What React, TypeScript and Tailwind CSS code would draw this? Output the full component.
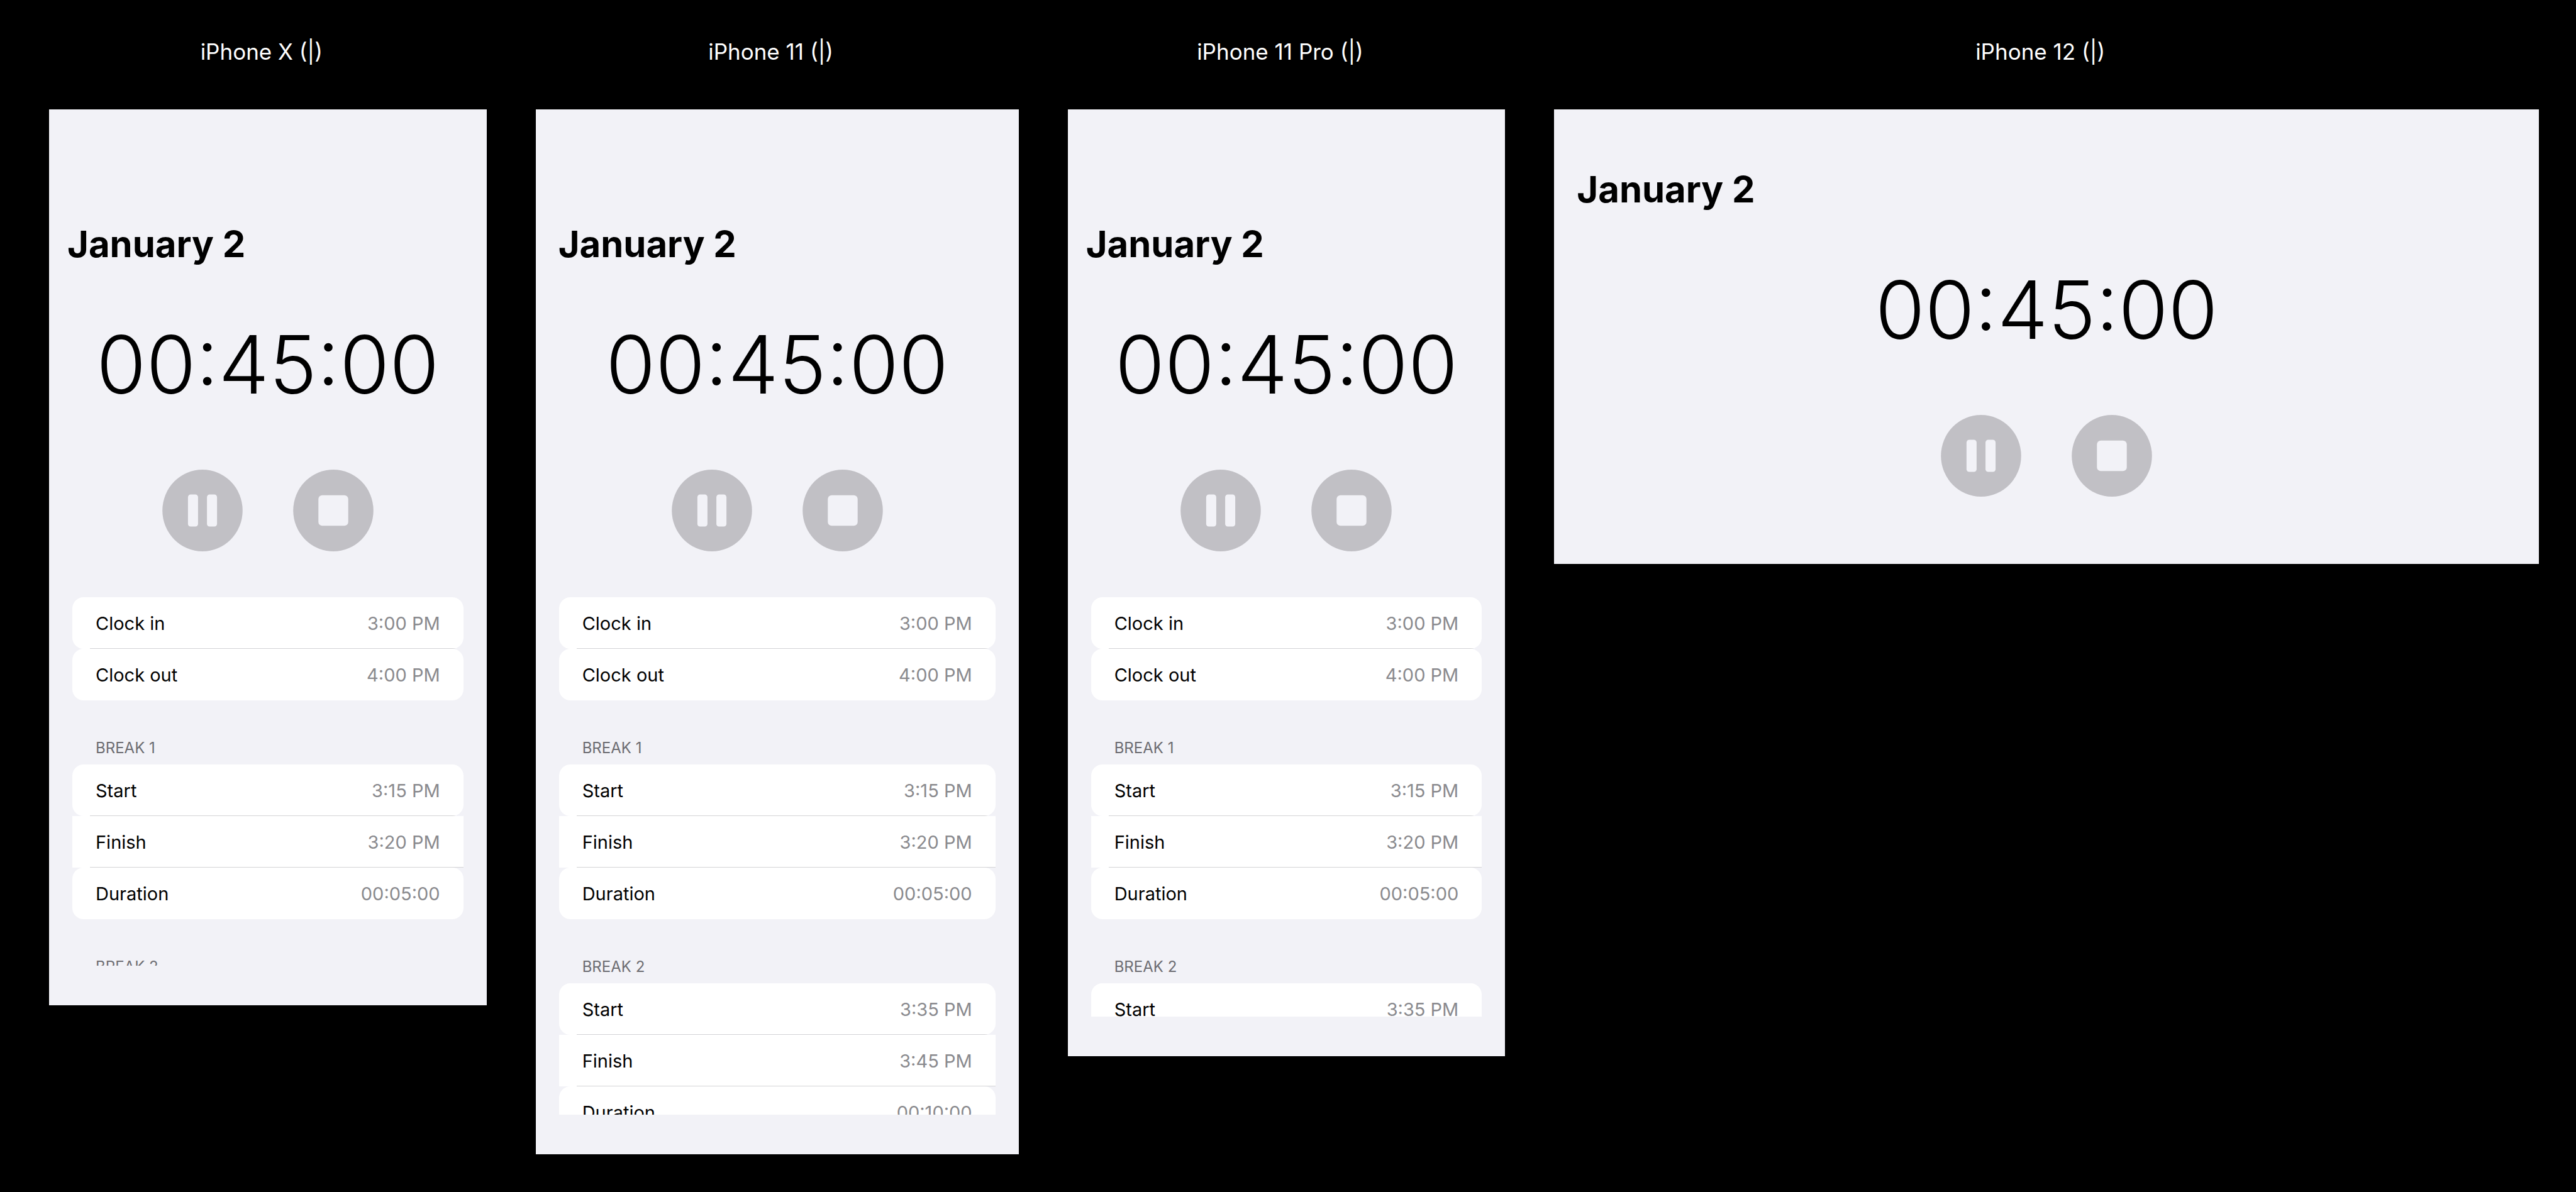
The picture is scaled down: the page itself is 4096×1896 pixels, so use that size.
import React from "react";

type Entry = { label: string; value: string };
type Section = { title?: string; entries: Entry[] };

type Device = {
  name: string;
  frame: string;
  title: string;
  sections: Section[];
};

const shift: Section = {
  entries: [
    { label: "Clock in", value: "3:00 PM" },
    { label: "Clock out", value: "4:00 PM" },
  ],
};

const firstBreak: Section = {
  title: "Break 1",
  entries: [
    { label: "Start", value: "3:15 PM" },
    { label: "Finish", value: "3:20 PM" },
    { label: "Duration", value: "00:05:00" },
  ],
};

const secondBreak: Section = {
  title: "Break 2",
  entries: [
    { label: "Start", value: "3:35 PM" },
    { label: "Finish", value: "3:45 PM" },
    { label: "Duration", value: "00:10:00" },
  ],
};

const allSections = [shift, firstBreak, secondBreak];

const devices: Device[] = [
  { name: "iPhone X (|)", frame: "aspect-[375/768] pt-[174px]", title: "px-[29px]", sections: allSections },
  { name: "iPhone 11 (|)", frame: "aspect-[414/896] pt-[174px]", title: "px-[36px]", sections: allSections },
  { name: "iPhone 11 Pro (|)", frame: "aspect-[375/812] pt-[174px]", title: "px-[29px]", sections: allSections },
  { name: "iPhone 12 (|)", frame: "aspect-[844/390] pt-[87px]", title: "px-[36px]", sections: [] },
];

function PauseIcon() {
  return (
    <svg viewBox="0 0 207 211" className="size-full" aria-hidden="true">
      <ellipse cx="103.5" cy="105.5" rx="103.5" ry="105.5" fill="#c1c0c5" />
      <rect x="66" y="64" width="26" height="83" rx="7" fill="#f2f2f7" />
      <rect x="115" y="64" width="26" height="83" rx="7" fill="#f2f2f7" />
    </svg>
  );
}

function StopIcon() {
  return (
    <svg viewBox="0 0 207 211" className="size-full" aria-hidden="true">
      <ellipse cx="103.5" cy="105.5" rx="103.5" ry="105.5" fill="#c1c0c5" />
      <rect x="65" y="66" width="77" height="79" rx="10" fill="#f2f2f7" />
    </svg>
  );
}

function Row({ entry, first, last }: { entry: Entry; first: boolean; last: boolean }) {
  return (
    <div
      className={
        "relative flex h-[82px] items-center justify-between overflow-hidden bg-white px-[37px] pt-[2px] text-[29px] leading-[36px] " +
        (first || last ? "rounded-[18px]" : "")
      }
    >
      <dt className="text-black">{entry.label}</dt>
      <dd className="text-[#8a8a8e]">{entry.value}</dd>
      {!last && <span className="absolute right-0 bottom-0 left-[28px] h-px bg-[#d4d4d6]" />}
    </div>
  );
}

function SectionList({ section }: { section: Section }) {
  return (
    <section>
      {section.title && (
        <h2 className="flex h-[102px] items-end px-[37px] pb-[10px] text-[24px] leading-[32px] text-[#6d6d72] uppercase">
          {section.title}
        </h2>
      )}
      <dl>
        {section.entries.map((entry, i) => (
          <Row key={entry.label} entry={entry} first={i === 0} last={i === section.entries.length - 1} />
        ))}
      </dl>
    </section>
  );
}

function Preview({ device }: { device: Device }) {
  return (
    <article className="flex min-w-0 flex-col">
      <header className="flex h-[174px] justify-center pt-[58px] pr-[20px] text-[35px] leading-[48px] text-white">
        {device.name}
      </header>
      <div className={"flex flex-col overflow-hidden bg-[#f2f2f7] pb-[63px] " + device.frame}>
        <h1 className={"text-[58px] leading-[80px] font-bold text-black " + device.title}>January 2</h1>
        <div className="mt-[72px] text-center text-[128px] leading-[160px] font-light text-black">
          00:45:00
        </div>
        <div className="mt-[87px] flex shrink-0 justify-center gap-[80px]">
          <button type="button" aria-label="Pause" className="h-[130px] w-[128px] rounded-full">
            <PauseIcon />
          </button>
          <button type="button" aria-label="Stop" className="h-[130px] w-[128px] rounded-full">
            <StopIcon />
          </button>
        </div>
        {device.sections.length > 0 && (
          <div className="mt-[73px] min-h-0 flex-1 overflow-hidden px-[37px]">
            {device.sections.map((section, i) => (
              <SectionList key={i} section={section} />
            ))}
          </div>
        )}
      </div>
    </article>
  );
}

export default function App() {
  return (
    <main className="grid min-h-screen grid-cols-[375fr_414fr_375fr_844fr] items-start gap-[78px] bg-black pr-[59px] pl-[78px] font-['Inter',sans-serif]">
      {devices.map((device) => (
        <Preview key={device.name} device={device} />
      ))}
    </main>
  );
}
